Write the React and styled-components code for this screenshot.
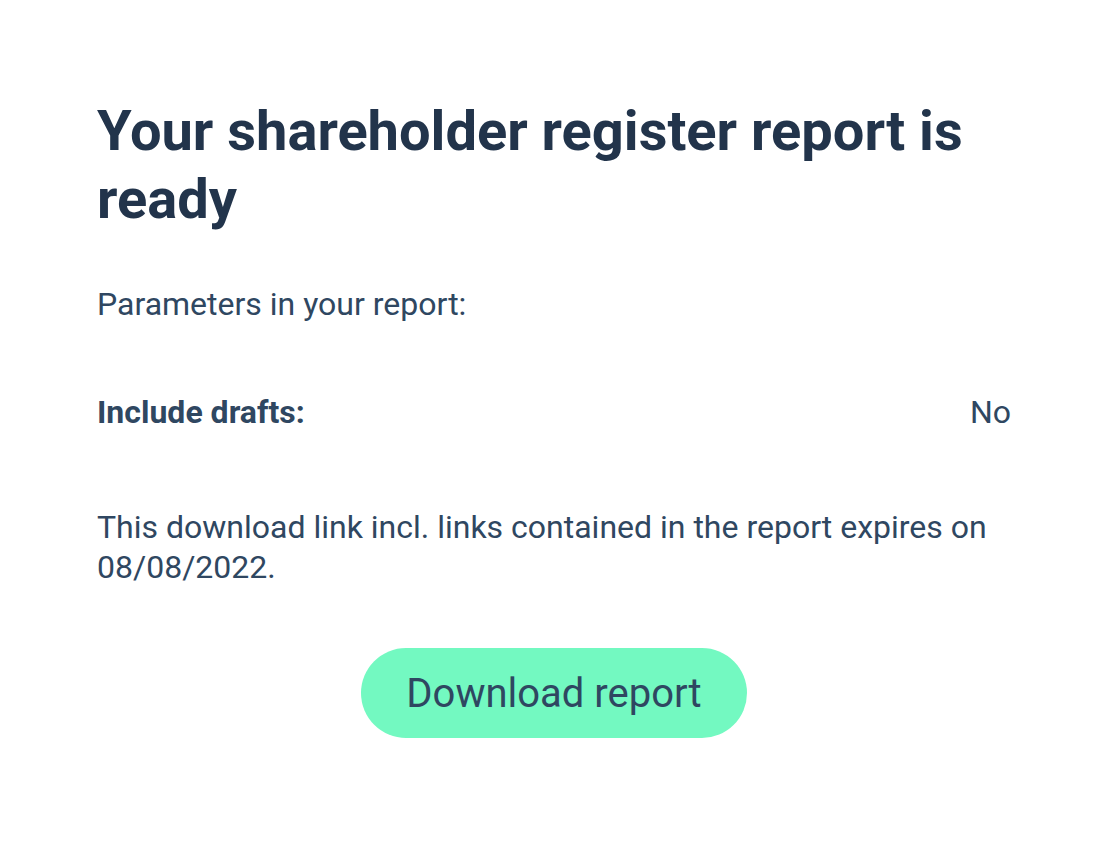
import React from "react";
import styled, { createGlobalStyle } from "styled-components";

const GlobalStyle = createGlobalStyle`
  html, body {
    margin: 0;
    padding: 0;
    background: #ffffff;
  }
  body {
    font-family: "Roboto", "Liberation Sans", sans-serif;
  }
`;

export default function App() {
  return (
    <>
      <GlobalStyle />
      <Modal>
        <Title>Your shareholder register report is ready</Title>
        <Intro>Parameters in your report:</Intro>
        <ParamRow>
          <ParamLabel>Include drafts:</ParamLabel>
          <ParamValue>No</ParamValue>
        </ParamRow>
        <Notice>
          This download link incl. links contained in the report expires on
          08/08/2022.
        </Notice>
        <Actions>
          <DownloadButton type="button">Download report</DownloadButton>
        </Actions>
      </Modal>
    </>
  );
}

const Modal = styled.div`
  box-sizing: border-box;
  width: 1108px;
  min-height: 856px;
  padding: 97px 97px 0 97px;
  display: flex;
  flex-direction: column;
  background: #ffffff;
`;

const Title = styled.h1`
  margin: 0;
  font-size: 56px;
  line-height: 68px;
  font-weight: 700;
  color: #22344b;
`;

const Intro = styled.p`
  margin: 51px 0 0 0;
  font-size: 32px;
  line-height: 40px;
  font-weight: 400;
  color: #2f4761;
`;

const ParamRow = styled.div`
  margin: 68px 0 0 0;
  display: flex;
  justify-content: space-between;
  align-items: baseline;
  font-size: 32px;
  line-height: 40px;
  color: #2f4761;
`;

const ParamLabel = styled.span`
  font-weight: 700;
`;

const ParamValue = styled.span`
  font-weight: 400;
`;

const Notice = styled.p`
  margin: 75px 0 0 0;
  font-size: 32px;
  line-height: 40px;
  color: #2f4761;
`;

const Actions = styled.div`
  margin: 61px 0 0 0;
  display: flex;
  justify-content: center;
`;

const DownloadButton = styled.button`
  height: 90px;
  padding: 0 45px;
  border: none;
  border-radius: 45px;
  background: #73f9c1;
  color: #2f4761;
  font-family: "Roboto", "Liberation Sans", sans-serif;
  font-size: 40px;
  font-weight: 400;
  cursor: pointer;
`;
